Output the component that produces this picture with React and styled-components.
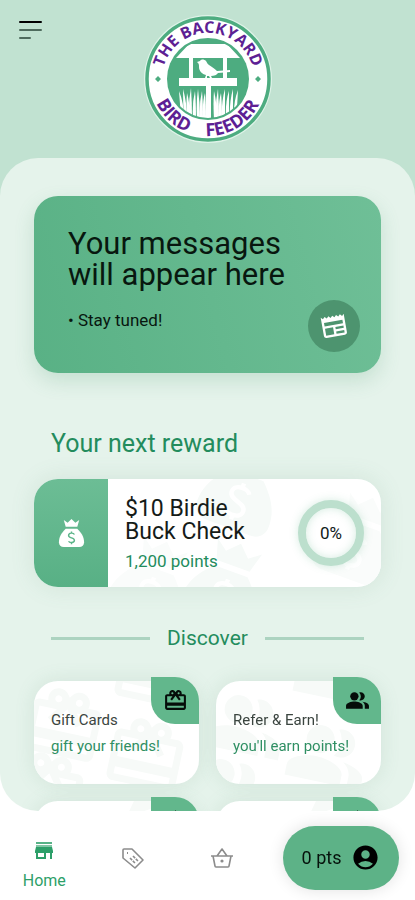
import React from "react";
import styled, { createGlobalStyle } from "styled-components";
import {
  MdAccountCircle,
  MdNewspaper,
  MdPeopleAlt,
  MdRedeem,
  MdStar
} from "react-icons/md";

const GlobalStyle = createGlobalStyle`
  * {
    box-sizing: border-box;
  }
  body {
    margin: 0;
    font-family: Roboto, "Liberation Sans", sans-serif;
    color: #10201a;
  }
  button {
    font: inherit;
    color: inherit;
    border: 0;
    padding: 0;
    background: none;
    cursor: pointer;
  }
  h1, h2, p {
    margin: 0;
    font-weight: 400;
  }
`;

const Screen = styled.div`
  display: flex;
  flex-direction: column;
  height: 100vh;
  background: #fff;
`;

const Header = styled.header`
  display: grid;
  grid-template-columns: 1fr auto 1fr;
  align-items: start;
  padding: 15px 19px;
  background: #c1e2d1;
`;

const MenuButton = styled.button`
  justify-self: start;
  margin-top: 5px;
  line-height: 0;
`;

/* green shows behind the top corners of the panel, white behind the bottom ones */
const PanelBack = styled.div`
  flex: 1;
  min-height: 0;
  background: linear-gradient(#c1e2d1 50%, #fff 50%);
`;

const Panel = styled.main`
  height: 100%;
  overflow-x: hidden;
  overflow-y: auto;
  scrollbar-width: none;
  padding: 38px 34px 0;
  border-radius: 38px;
  background: #e5f3eb;
`;

const MessageCard = styled.section`
  display: flex;
  justify-content: space-between;
  align-items: flex-end;
  min-height: 177px;
  padding: 32px 21px 21px 34px;
  border-radius: 24px;
  background: linear-gradient(75deg, #59b185, #6fbf97);
  box-shadow: 0 8px 20px rgba(70, 150, 105, 0.2);
  color: #08170f;
`;

const MessageText = styled.div`
  align-self: flex-start;

  h1 {
    font-size: 31px;
    line-height: 31px;
    white-space: nowrap;
  }
  p {
    margin-top: 20px;
    font-size: 17px;
    line-height: 20px;
  }
`;

const NewsButton = styled.button`
  display: flex;
  align-items: center;
  justify-content: center;
  flex: none;
  width: 52px;
  height: 52px;
  border-radius: 50%;
  background: #4d946f;

  svg {
    width: 28px;
    height: 28px;
    color: #fff;
    transform: rotate(-10deg);
  }
`;

const Title = styled.h2`
  margin: 56px 17px 20px;
  font-size: 25px;
  line-height: 30px;
  color: #238c5d;
`;

const RewardCard = styled.section`
  position: relative;
  display: flex;
  align-items: stretch;
  min-height: 108px;
  border-radius: 24px;
  overflow: hidden;
  background: #fff;
`;

const Shade = styled.div`
  border-radius: 24px;
  box-shadow: 0 0 24px rgba(90, 140, 115, 0.14);
`;

const RewardSide = styled.div`
  display: flex;
  align-items: center;
  justify-content: center;
  flex: none;
  width: 74px;
  background: linear-gradient(#6cbd95, #58b085);
`;

const RewardText = styled.div`
  position: relative;
  flex: 1;
  padding: 18px 0 16px 17px;

  h2 {
    font-size: 23px;
    line-height: 23px;
    color: #151b18;
  }
  p {
    margin-top: 8px;
    font-size: 17px;
    line-height: 20px;
    color: #238c5d;
  }
`;

const Ring = styled.div`
  position: relative;
  display: flex;
  align-items: center;
  justify-content: center;
  align-self: center;
  flex: none;
  width: 66px;
  height: 66px;
  margin-right: 17px;
  border: 8px solid #bcdfcd;
  border-radius: 50%;
  background: #fff;
  box-shadow: 0 0 8px rgba(93, 178, 135, 0.25),
    inset 0 0 8px rgba(93, 178, 135, 0.25);
  font-size: 17px;
`;

const Divider = styled.div`
  display: flex;
  align-items: center;
  gap: 17px;
  margin: 37px 17px 29px;

  h2 {
    font-size: 21px;
    line-height: 28px;
    color: #238c5d;
  }
  &::before,
  &::after {
    content: "";
    flex: 1;
    height: 3px;
    background: #acd3c0;
  }
`;

const Tiles = styled.div`
  display: grid;
  grid-template-columns: 1fr 1fr;
  gap: 17px;
`;

const TileBox = styled.button`
  position: relative;
  display: flex;
  flex-direction: column;
  align-items: flex-start;
  gap: 6px;
  min-height: 103px;
  padding: 29px 17px 0;
  border-radius: 24px;
  background: #fff;
  box-shadow: 0 0 20px rgba(90, 140, 115, 0.14);
  font-size: 15px;
  line-height: 20px;
  text-align: left;
`;

const TileName = styled.span`
  position: relative;
  color: #3b4540;
`;

const TileNote = styled.span`
  position: relative;
  color: #2f8f63;
`;

const Badge = styled.span`
  position: absolute;
  top: -4px;
  right: 0;
  display: flex;
  align-items: center;
  justify-content: center;
  width: 48px;
  height: 47px;
  border-radius: 0 24px 0 24px;
  background: #62b78c;
  color: #050d09;

  svg {
    width: 25px;
    height: 25px;
  }
`;

const Pattern = styled.span`
  position: absolute;
  inset: 0;
  overflow: hidden;
  border-radius: 24px;
  color: #f7faf8;

  svg {
    position: absolute;
    width: 84px;
    height: 84px;
    transform: rotate(12deg);
  }
  svg:nth-child(1) {
    left: 70px;
    top: 32px;
  }
  svg:nth-child(2) {
    left: -12px;
    top: 2px;
  }
  svg:nth-child(3) {
    left: 78px;
    top: -52px;
  }
  svg:nth-child(4) {
    left: -30px;
    top: 66px;
  }
`;

const BagPattern = styled.span`
  position: absolute;
  inset: 0 0 0 74px;
  overflow: hidden;

  svg {
    position: absolute;
    width: 88px;
    height: 88px;
    transform: rotate(20deg);
  }
  svg:nth-child(1) {
    left: 90px;
    top: -34px;
  }
  svg:nth-child(2) {
    left: 0;
    top: 60px;
  }
  svg:nth-child(3) {
    left: 74px;
    top: 62px;
  }
  svg:nth-child(4) {
    left: 206px;
    top: 16px;
  }
`;

const Nav = styled.nav`
  display: flex;
  align-items: center;
  flex: none;
  height: 89px;
  padding: 6px 16px 2px 0;
  background: #fff;
`;

const NavItem = styled.button`
  display: flex;
  flex-direction: column;
  align-items: center;
  gap: 8px;
  flex: 1;
  padding-top: ${props => (props.$active ? 14 : 0)}px;
  font-size: 16px;
  line-height: 20px;
  color: ${props => (props.$active ? "#2d9f69" : "#8c8c8c")};
`;

const Points = styled.button`
  display: flex;
  align-items: center;
  justify-content: center;
  gap: 10px;
  flex: none;
  width: 116px;
  height: 64px;
  margin-left: 17px;
  border-radius: 32px;
  background: #5db287;
  box-shadow: 0 0 16px rgba(0, 0, 0, 0.12);
  font-size: 18px;
  color: #06120c;

  svg {
    width: 29px;
    height: 29px;
    color: #000;
  }
`;

const tiles = [
  { name: "Gift Cards", note: "gift your friends!", icon: MdRedeem },
  { name: "Refer & Earn!", note: "you'll earn points!", icon: MdPeopleAlt },
  { icon: MdStar },
  { icon: MdStar }
];

const blades = [
  [35, 76, 38], [39, 74, 41], [43, 78, 44], [47, 73, 46], [51, 76, 50],
  [54, 74, 54], [58, 76, 57], [61, 78, 60], [70, 76, 71], [74, 74, 73],
  [77, 78, 76], [81, 74, 79], [85, 76, 83], [89, 74, 87], [94, 75, 91]
];

const Logo = () => (
  <svg width="128" height="128" viewBox="0 0 128 128">
    <defs>
      <path id="arc-top" d="M18 64a46 46 0 0 1 92 0" />
      <path id="arc-bottom" d="M7 64a57 57 0 0 0 114 0" />
      <clipPath id="inner">
        <circle cx="64" cy="64" r="39" />
      </clipPath>
    </defs>
    <circle cx="64" cy="64" r="64" fill="#dff3e8" />
    <circle cx="64" cy="64" r="61" fill="#fff" stroke="#4dac80" strokeWidth="3.500" />
    <circle cx="64" cy="64" r="41" fill="#4dac80" />
    <g fill="#fff" clipPath="url(#inner)">
      <path d="M45 29h38l13 14H32z" />
      <path d="M45 42h4v22h-4zM79 42h4v22h-4z" />
      <path d="M35 63h58v8H35z" />
      <path d="M62 70h5v36h-5z" />
      {blades.map(([x, y, base]) => (
        <path key={x} d={`M${x} ${y}Q${base - 2} 88 ${base - 1} 104h3Q${base + 2} 88 ${x} ${y}z`} />
      ))}
    </g>
    <path
      fill="#fff"
      d="M53 47l3-1c1-2 4-2 6 0 1 1 1 3 3 4 3 2 6 4 8 6l13-1v2l-12 1c-1 2-4 3-7 3l1 2h-2l-1-2h-2v2h-2l1-3c-4-1-7-4-7-8 0-2 0-3-1-4z"
    />
    <path fill="#4dac80" d="M14 61l3 3-3 3-3-3zM114 61l3 3-3 3-3-3z" />
    <g fill="#5d1f94" fontFamily="'Open Sans', 'Noto Sans', sans-serif" fontWeight="700" textAnchor="middle">
      <text fontSize="16">
        <textPath href="#arc-top" startOffset="50%">THE BACKYARD</textPath>
      </text>
      <text fontSize="18">
        <textPath href="#arc-bottom" startOffset="26%">BIRD</textPath>
      </text>
      <text fontSize="18">
        <textPath href="#arc-bottom" startOffset="67%">FEEDER</textPath>
      </text>
    </g>
  </svg>
);

const MoneyBag = ({ size, color = "#fff", sign = "#5db58a" }) => (
  <svg width={size} height={size} viewBox="0 0 28 30" fill={color}>
    <path d="M6 1l4 3 4-4 4 4 4-3-2 7H8z" />
    <path d="M8 10h12c4 4 7 8 7 14 0 3-2 5-5 5H6c-3 0-5-2-5-5 0-6 3-10 7-14z" />
    {/* dollar sign */}
    <path
      d="M17 16c-1-2-6-2-6 1 0 3 6 2 6 5 0 3-5 3-6 1M14 13v2M14 24v2"
      fill="none"
      stroke={sign}
      strokeWidth="1.5"
    />
  </svg>
);

const StoreIcon = () => (
  <svg width="24" height="24" viewBox="0 0 24 24" fill="currentColor">
    <path d="M4 3h16v2H4z" opacity="0.8" />
    <path d="M4 6h16v2H4z" opacity="0.6" />
    <path d="M4 8h16l1 4v2h-1v6h-2v-6h-4v6H4v-6H3v-2zM6 14v4h6v-4z" fillRule="evenodd" />
  </svg>
);

const TagIcon = () => (
  <svg width="24" height="24" viewBox="0 0 24 24" fill="none" stroke="currentColor" strokeWidth="1.6">
    <path d="M2 4q0-1 1-1h8l11 11-8 8L2 12z" strokeLinejoin="round" />
    <path d="M6 7h1" strokeWidth="2" />
    <path d="M9 12l5 5M12 10l5 5" strokeDasharray="3 1" />
  </svg>
);

const BasketIcon = () => (
  <svg width="24" height="24" viewBox="0 0 24 24" fill="none" stroke="currentColor" strokeWidth="1.6">
    <path d="M1 10h22M3 10l2 10q0 1 1 1h12q1 0 1-1l2-10M7 10l5-7 5 7" strokeLinejoin="round" />
    <circle cx="12" cy="15" r="1.600" fill="currentColor" stroke="none" />
  </svg>
);

const Tile = ({ name, note, icon: Icon }) => (
  <TileBox>
    <Pattern>
      <Icon />
      <Icon />
      <Icon />
      <Icon />
    </Pattern>
    {name && <TileName>{name}</TileName>}
    {note && <TileNote>{note}</TileNote>}
    <Badge>
      <Icon />
    </Badge>
  </TileBox>
);

export default function App() {
  return (
    <Screen>
      <GlobalStyle />
      <Header>
        <MenuButton aria-label="Menu">
          <svg width="23" height="20" viewBox="0 0 23 20">
            <path d="M1 2h21" stroke="#000" strokeWidth="2" strokeLinecap="round" />
            <path d="M1 10h21M1 18h10" stroke="#4e6b5d" strokeWidth="2" strokeLinecap="round" />
          </svg>
        </MenuButton>
        <Logo />
      </Header>

      <PanelBack>
        <Panel>
          <MessageCard>
            <MessageText>
              <h1>
                Your messages
                <br />
                will appear here
              </h1>
              <p>• Stay tuned!</p>
            </MessageText>
            <NewsButton aria-label="News">
              <MdNewspaper />
            </NewsButton>
          </MessageCard>

          <Title>Your next reward</Title>
          <Shade>
            <RewardCard>
              <BagPattern>
                <MoneyBag size={88} color="#f6faf8" sign="#fff" />
                <MoneyBag size={88} color="#fafcfb" sign="#fff" />
                <MoneyBag size={88} color="#f6faf8" sign="#fff" />
                <MoneyBag size={88} color="#fafcfb" sign="#fff" />
              </BagPattern>
              <RewardSide>
                <MoneyBag size={29} />
              </RewardSide>
              <RewardText>
                <h2>
                  $10 Birdie
                  <br />
                  Buck Check
                </h2>
                <p>1,200 points</p>
              </RewardText>
              <Ring>0%</Ring>
            </RewardCard>
          </Shade>

          <Divider>
            <h2>Discover</h2>
          </Divider>
          <Tiles>
            {tiles.map((tile, i) => (
              <Tile key={i} {...tile} />
            ))}
          </Tiles>
        </Panel>
      </PanelBack>

      <Nav>
        <NavItem $active>
          <StoreIcon />
          Home
        </NavItem>
        <NavItem aria-label="Offers">
          <TagIcon />
        </NavItem>
        <NavItem aria-label="Shop">
          <BasketIcon />
        </NavItem>
        <Points>
          0 pts
          <MdAccountCircle />
        </Points>
      </Nav>
    </Screen>
  );
}
